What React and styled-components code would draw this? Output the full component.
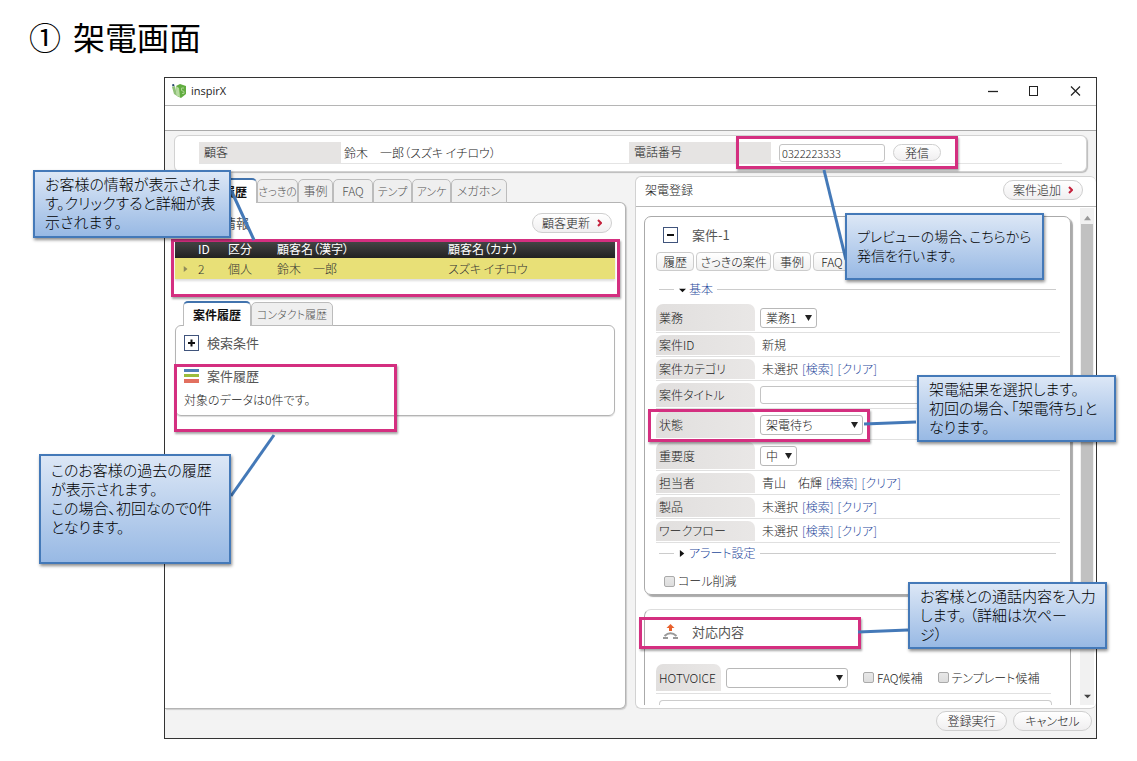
import React from "react";
import styled, { createGlobalStyle, css } from "styled-components";

const Global = createGlobalStyle`
  * { box-sizing: border-box; }
  body {
    margin: 0;
    background: #fff;
    color: #222;
    font-family: "Noto Sans CJK JP", "Noto Sans", sans-serif;
    font-feature-settings: "palt";
    font-size: 12px;
    line-height: 16px;
    font-weight: 300;
  }
  button, input, select {
    font: inherit;
    font-feature-settings: inherit;
    color: inherit;
    margin: 0;
  }
`;

const Page = styled.main`
  position: relative;
  min-width: 1000px;
  padding: 14px 40px 22px 164px;
`;

const Title = styled.h1`
  display: flex;
  gap: 12px;
  margin: 0 0 19px -135px;
  color: #000;
  font-size: 32px;
  line-height: 44px;
  font-weight: 400;
`;

/* ---------- application window ---------- */

const Window = styled.section`
  border: 1px solid #333;
  background: #f3f3f3;
`;

const TitleBar = styled.header`
  display: flex;
  align-items: center;
  gap: 4px;
  height: 28px;
  padding: 0 14px 2px 6px;
  background: #fff;
  border-bottom: 1px solid #b5b5b5;
  color: #222;
  font-family: "Open Sans", sans-serif;
  font-weight: 400;
  font-size: 11px;
`;

const AppName = styled.span`
  flex: 1;
`;

const WindowControls = styled.div`
  display: flex;
  gap: 28px;
`;

const WindowButton = styled.button`
  display: flex;
  padding: 0;
  border: 0;
  background: none;
`;

const MenuStrip = styled.div`
  height: 25px;
  background: #fff;
  border-bottom: 1px solid #aaa;
`;

const CustomerBar = styled.div`
  margin: 4px 9px 6px;
  padding: 6px 24px 7px;
  height: 37px;
  background: #fff;
  border: 1px solid #d2d2d2;
  border-radius: 6px;
  box-shadow: 1px 1px 1px #bbb;
`;

const CustomerFields = styled.div`
  display: grid;
  grid-template-columns: 142px 1fr 142px 291px;
  height: 22px;
  border-bottom: 1px solid #e4e4e4;
`;

const FieldName = styled.label`
  padding: 2px 5px;
  background: #e6e4e3;
`;

const FieldValue = styled.div`
  display: flex;
  align-items: center;
  gap: 8px;
  padding: 0 ${(p) => (p.$inset ? 8 : 3)}px;
`;

const TextInput = styled.input`
  width: ${(p) => p.$width};
  height: 18px;
  padding: 0 2px;
  border: 1px solid #c4c4c4;
  border-radius: 3px;
  background: #fff;
  font-size: 11px;
  line-height: 16px;
`;

const PillButton = styled.button`
  display: flex;
  align-items: center;
  justify-content: center;
  gap: 7px;
  min-width: ${(p) => p.$width}px;
  height: ${(p) => (p.$small ? 17 : 20)}px;
  padding: 0 9px;
  border: 1px solid #cfcfcf;
  border-radius: 10px;
  background: linear-gradient(#fff, #f0eff0);
  line-height: 16px;
`;

const Columns = styled.div`
  display: grid;
  grid-template-columns: 1fr 1fr;
  gap: 9px;
`;

/* ---------- left column ---------- */

const LeftColumn = styled.div`
  display: flex;
  flex-direction: column;
`;

const Tabs = styled.nav`
  display: flex;
  padding-left: ${(p) => p.$indent}px;
  position: relative;
  margin-bottom: -1px;
`;

const Tab = styled.button`
  width: ${(p) => p.$width}px;
  height: 24px;
  margin-top: 1px;
  padding: 0;
  overflow: hidden;
  white-space: nowrap;
  border: 1px solid #bcbcbc;
  border-radius: 5px 5px 0 0;
  background: #efefef;
  color: #555;
  font-size: ${(p) => (p.$small ? 11 : 12)}px;
  ${(p) =>
    p.$active &&
    css`
      height: 25px;
      margin-top: 0;
      border-top: 2px solid #4173ad;
      border-bottom: 0;
      background: #fff;
      color: #111;
      font-weight: 700;
    `}
`;

const LeftPanel = styled.section`
  flex: 1;
  padding: 10px 10px 11px;
  background: #fff;
  border: 1px solid #b4b4b4;
  border-left: 0;
  border-radius: 0 6px 6px 0;
  box-shadow: 1px 1px 1px #ccc;
`;

const PanelHead = styled.div`
  display: flex;
  align-items: center;
  justify-content: space-between;
  height: 20px;
  padding: 0 3px 0 22px;
`;

const Heading = styled.h2`
  margin: 0;
  font-size: 13px;
  line-height: 18px;
  font-weight: 400;
  color: #555;
`;

const CustomerTable = styled.table`
  width: 100%;
  margin: 7px 0 22px;
  border-collapse: collapse;
  table-layout: fixed;
  text-align: left;
  box-shadow: 0 2px 2px #ddd;

  col:nth-child(1) { width: 23px; }
  col:nth-child(2) { width: 30px; }
  col:nth-child(3) { width: 49px; }
  col:nth-child(4) { width: 171px; }
  th {
    height: 18px;
    padding: 0;
    background: linear-gradient(#484848, #222);
    color: #fff;
    font-weight: 400;
  }
  td {
    height: 21px;
    padding: 0;
    background: #e8e077;
    color: #333;
  }
  td svg { display: block; margin-left: 8px; }
`;

const HistoryPanel = styled.section`
  padding: 8px 8px 6px;
  height: 91px;
  border: 1px solid #b4b4b4;
  border-radius: 6px;
  box-shadow: 0 1px 1px #ddd;
`;

const IconHeading = styled.div`
  display: flex;
  align-items: center;
  gap: ${(p) => (p.$wide ? 14 : 8)}px;
  height: ${(p) => p.$height}px;
  margin-top: ${(p) => (p.$spaced ? 15 : 0)}px;
  padding-left: ${(p) => (p.$wide ? 7 : 0)}px;
`;

const ToggleButton = styled.button`
  display: flex;
  padding: 0;
  border: 0;
  background: none;
`;

const Message = styled.p`
  margin: 7px 0 0;
`;

/* ---------- right column ---------- */

const RightPanel = styled.section`
  display: flex;
  flex-direction: column;
  margin-top: -2px;
  background: #fff;
  border: 1px solid #d2d2d2;
  border-right: 0;
  border-radius: 6px;
`;

const RightHead = styled.div`
  display: flex;
  align-items: center;
  justify-content: space-between;
  height: 30px;
  padding: 0 13px 3px 9px;
  border-bottom: 1px solid #b8b8b8;
`;

const ScrollRow = styled.div`
  display: flex;
  align-items: stretch;
  margin-bottom: 3px;
`;

const ScrollContent = styled.div`
  flex: 1;
  padding: 9px 9px 0 8px;
`;

const ScrollTrack = styled.div`
  display: flex;
  flex-direction: column;
  align-items: center;
  justify-content: space-between;
  width: 14px;
  margin: 1px 2px 0 0;
  padding: 6px 0;
  background: #f1f1f1;
`;

const ScrollThumb = styled.div`
  flex: 1;
  width: 12px;
  margin: 3px 0 108px;
  background: #c1c1c1;
`;

const Card = styled.section`
  padding: 8px 10px 5px 11px;
  border: 1px solid #aaa;
  border-radius: 7px;
  box-shadow: 2px 2px 1px #aaa;
  ${(p) =>
    p.$open &&
    css`
      margin-top: 14px;
      padding-bottom: 0;
      border-bottom: 0;
      border-top-color: #ddd;
      border-radius: 7px 7px 0 0;
      box-shadow: none;
    `}
`;

const ButtonRow = styled.div`
  display: flex;
  gap: 2px;
  margin-top: 7px;
`;

const SmallButton = styled.button`
  width: ${(p) => p.$width}px;
  height: 19px;
  padding: 0;
  white-space: nowrap;
  border: 1px solid #ccc;
  border-radius: 4px;
  background: linear-gradient(#fff, #f0f0f0);
  line-height: 16px;
`;

const Legend = styled.div`
  display: flex;
  align-items: center;
  height: 16px;
  margin: ${(p) => p.$top}px 4px 0 3px;
  color: #1f4a9c;

  &::before {
    content: "";
    width: 15px;
    border-top: 1px solid #ccc;
  }
  &::after {
    content: "";
    flex: 1;
    margin-left: 4px;
    border-top: 1px solid #ccc;
  }
  button {
    display: flex;
    align-items: center;
    gap: 3px;
    margin-left: 5px;
    padding: 0;
    border: 0;
    background: none;
  }
`;

const FormRows = styled.div`
  margin-top: 5px;
`;

const Row = styled.div`
  display: flex;
  align-items: center;
  height: ${(p) => (p.$size === "l" ? 31 : p.$size === "m" ? 28 : 24)}px;
  padding: 2px 0 1px;
  border-bottom: 1px solid #e0e0e0;
`;

const RowLabel = styled.label`
  display: flex;
  align-items: center;
  align-self: stretch;
  width: ${(p) => (p.$narrow ? 65 : 99)}px;
  padding-left: 3px;
  border-radius: 7px 7px 0 0;
  background: linear-gradient(90deg, #e1dfde, #e9e7e6);
`;

const RowValue = styled.div`
  display: flex;
  flex: 1;
  align-items: center;
  gap: 4px;
  padding-left: ${(p) => (p.$text ? 7 : 5)}px;
`;

const Link = styled.a`
  color: #1f4a9c;
  text-decoration: none;
`;

const SelectBox = styled.div`
  display: grid;
  width: ${(p) => p.$width}px;
  height: 20px;

  > * { grid-area: 1 / 1; }
  svg {
    align-self: center;
    justify-self: end;
    margin-right: 5px;
    pointer-events: none;
  }
  select {
    appearance: none;
    width: 100%;
    height: 20px;
    padding: 0 5px;
    border: 1px solid #b8b8b8;
    border-radius: 3px;
    background: #fff;
    line-height: 16px;
  }
`;

const CheckLabel = styled.label`
  display: flex;
  align-items: center;
  gap: 3px;
`;

const CheckLine = styled.div`
  margin: 12px 0 0 8px;
`;

const Checkbox = styled.input`
  appearance: none;
  width: 11px;
  height: 11px;
  border: 1px solid #aaa;
  border-radius: 2px;
  background: linear-gradient(#e8e8e8, #ddd);
`;

const VoiceRow = styled.div`
  display: flex;
  align-items: center;
  height: 30px;
  margin: 18px 9px 0 0;
  padding-bottom: 2px;
  border-bottom: 1px solid #e0e0e0;
`;

const VoiceFields = styled.div`
  display: flex;
  align-items: center;
  gap: 15px;
  margin-left: 5px;
`;

const NoteBoxTop = styled.div`
  height: 5px;
  margin: 6px 8px 0 3px;
  border: 1px solid #ccc;
  border-bottom: 0;
  border-radius: 4px 4px 0 0;
`;

const Footer = styled.footer`
  display: flex;
  justify-content: flex-end;
  gap: 6px;
  padding: 2px 4px 7px;
`;

/* ---------- annotations over the window ---------- */

const placed = css`
  position: absolute;
  top: ${(p) => p.$top}px;
  ${(p) => (p.$right !== undefined ? `right: ${p.$right}px;` : `left: ${p.$left}px;`)}
  width: ${(p) => p.$width}px;
  height: ${(p) => p.$height}px;
`;

const Highlight = styled.div`
  ${placed}
  border: 3px solid #d42f80;
  box-shadow: 1px 2px 2px rgba(0, 0, 0, 0.35);
  pointer-events: none;
`;

const Callout = styled.aside`
  ${placed}
  padding: ${(p) => p.$pad}px 0 0 10px;
  border: 2px solid #4479b8;
  background: linear-gradient(#dce7f6, #98b9e4);
  box-shadow: 1px 2px 3px rgba(0, 0, 0, 0.45);
  color: #000;
  font-size: ${(p) => (p.$compact ? 14 : 15)}px;
  line-height: 19px;
  white-space: nowrap;
`;

const ConnectorSvg = styled.svg`
  ${placed}
  overflow: visible;
  pointer-events: none;
`;

function Connector({ top, left, right, width, height, rising }) {
  return (
    <ConnectorSvg $top={top} $left={left} $right={right} $width={width} $height={height} aria-hidden="true">
      <line
        x1="0"
        x2={width}
        y1={rising ? height : 0}
        y2={rising ? 0 : height}
        stroke="#4479b8"
        strokeWidth="3"
      />
    </ConnectorSvg>
  );
}

/* ---------- icons ---------- */

const Logo = () => (
  <svg width="16" height="16" viewBox="0 0 16 16" aria-hidden="true">
    <path d="M1 1.5 L3 1 L3.5 3 L1.5 3.5 Z" fill="#26466b" />
    <path d="M1 4 L4 3 L6 13 L3 11 Z" fill="#8fc077" />
    <path d="M5 3 L9 1 L15 3 L15 11 L10 15 L6 13 Z" fill="#62ad40" />
    <path d="M5 3 L8 5 L9 14 L6 13 Z" fill="#b7dba0" />
    <path d="M13 5 H10.5 V7.5 L13 8.5 V10.5 H11" stroke="#a9d391" strokeWidth="1" fill="none" />
  </svg>
);

const Chevron = () => (
  <svg width="5" height="8" viewBox="0 0 5 8" aria-hidden="true">
    <path d="M1 1 L4 4 L1 7" fill="none" stroke="#c4213c" strokeWidth="2" />
  </svg>
);

const Toggle = ({ plus }) => (
  <svg width="15" height="16" viewBox="0 0 15 16" aria-hidden="true">
    <rect x="0.5" y="0.5" width="14" height="15" fill="#fff" stroke="#40547c" />
    <path d={plus ? "M4 8 H11 M7.5 4.5 V11.5" : "M4 8 H11"} stroke="#111" strokeWidth="2" />
  </svg>
);

const Bars = () => (
  <svg width="15" height="14" viewBox="0 0 15 14" aria-hidden="true">
    <rect width="15" height="3" fill="#4f7fb8" />
    <rect y="5" width="15" height="3" fill="#9bbd3c" />
    <rect y="10" width="15" height="4" fill="#e2705f" />
  </svg>
);

const CallIcon = () => (
  <svg width="15" height="16" viewBox="0 0 15 16" aria-hidden="true">
    <path d="M7.5 0 L11.5 4 H9 V7 H6 V4 H3.5 Z" fill="#e8602c" />
    <path d="M1.5 12 Q7.5 6.5 13.5 12" fill="none" stroke="#999" strokeWidth="2" />
    <path d="M0 14 H5 M10 14 H15" stroke="#999" strokeWidth="2" />
  </svg>
);

const Triangle = ({ dir = "down", color = "#222", size = 7 }) => {
  const shape = {
    down: "M0 1 H8 L4 8 Z",
    up: "M0 7 H8 L4 2 Z",
    right: "M1 0 V8 L6 4 Z",
    flat: "M0 3 H8 L4 7 Z",
  }[dir];
  return (
    <svg width={size} height={size} viewBox="0 0 8 8" aria-hidden="true">
      <path d={shape} fill={color} />
    </svg>
  );
};

/* ---------- composed parts ---------- */

function Select({ id, width, value }) {
  return (
    <SelectBox $width={width}>
      <select id={id} defaultValue={value}>
        <option>{value}</option>
      </select>
      <Triangle />
    </SelectBox>
  );
}

function FormRow({ label, size, htmlFor, text, children }) {
  return (
    <Row $size={size}>
      <RowLabel as={htmlFor ? "label" : "div"} htmlFor={htmlFor}>
        {label}
      </RowLabel>
      <RowValue $text={text}>{children}</RowValue>
    </Row>
  );
}

function Picker({ value }) {
  return (
    <>
      <span>{value}</span>
      <Link href="#search">[検索]</Link>
      <Link href="#clear">[クリア]</Link>
    </>
  );
}

export default function App() {
  return (
    <Page>
      <Global />
      <Title>
        <span>①</span>
        <span>架電画面</span>
      </Title>

      <Window>
        <TitleBar>
          <Logo />
          <AppName>inspirX</AppName>
          <WindowControls>
            <WindowButton aria-label="最小化">
              <svg width="12" height="12">
                <path d="M1 6.5 H11" stroke="#222" strokeWidth="1.3" />
              </svg>
            </WindowButton>
            <WindowButton aria-label="最大化">
              <svg width="13" height="12">
                <rect x="2.5" y="1.5" width="8" height="9" fill="none" stroke="#222" />
              </svg>
            </WindowButton>
            <WindowButton aria-label="閉じる">
              <svg width="14" height="12">
                <path d="M3 1.5 L12 10.5 M12 1.5 L3 10.5" stroke="#222" strokeWidth="1.2" />
              </svg>
            </WindowButton>
          </WindowControls>
        </TitleBar>
        <MenuStrip />

        <CustomerBar>
          <CustomerFields>
            <FieldName as="div">顧客</FieldName>
            <FieldValue>鈴木　一郎（スズキ イチロウ）</FieldValue>
            <FieldName htmlFor="phone">電話番号</FieldName>
            <FieldValue $inset>
              <TextInput id="phone" type="tel" $width="106px" defaultValue="0322223333" />
              <PillButton $small $width={48}>発信</PillButton>
            </FieldValue>
          </CustomerFields>
        </CustomerBar>

        <Columns>
          <LeftColumn>
            <Tabs $indent={24}>
              <Tab $active $width={68}>顧客履歴</Tab>
              <Tab $small $width={41}>さっきの</Tab>
              <Tab $width={35}>事例</Tab>
              <Tab $width={40}>FAQ</Tab>
              <Tab $small $width={39}>テンプ</Tab>
              <Tab $small $width={39}>アンケ</Tab>
              <Tab $width={56}>メガホン</Tab>
            </Tabs>
            <LeftPanel>
              <PanelHead>
                <Heading>顧客情報</Heading>
                <PillButton $width={79}>
                  顧客更新 <Chevron />
                </PillButton>
              </PanelHead>
              <CustomerTable>
                <colgroup>
                  <col />
                  <col />
                  <col />
                  <col />
                  <col />
                </colgroup>
                <thead>
                  <tr>
                    <th aria-label="選択" />
                    <th>ID</th>
                    <th>区分</th>
                    <th>顧客名（漢字）</th>
                    <th>顧客名（カナ）</th>
                  </tr>
                </thead>
                <tbody>
                  <tr>
                    <td>
                      <Triangle dir="right" color="#8f8b5a" size={6} />
                    </td>
                    <td>2</td>
                    <td>個人</td>
                    <td>鈴木　一郎</td>
                    <td>スズキ イチロウ</td>
                  </tr>
                </tbody>
              </CustomerTable>

              <Tabs $indent={8}>
                <Tab $active $width={68}>案件履歴</Tab>
                <Tab $small $width={82}>コンタクト履歴</Tab>
              </Tabs>
              <HistoryPanel>
                <IconHeading $height={18}>
                  <ToggleButton aria-label="検索条件を開く">
                    <Toggle plus />
                  </ToggleButton>
                  <Heading>検索条件</Heading>
                </IconHeading>
                <IconHeading $spaced $height={18}>
                  <Bars />
                  <Heading>案件履歴</Heading>
                </IconHeading>
                <Message>対象のデータは0件です。</Message>
              </HistoryPanel>
            </LeftPanel>
          </LeftColumn>

          <RightPanel>
            <RightHead>
              <span>架電登録</span>
              <PillButton $width={79}>
                案件追加 <Chevron />
              </PillButton>
            </RightHead>
            <ScrollRow>
              <ScrollContent>
                <Card>
                  <IconHeading $wide $height={20}>
                    <ToggleButton aria-label="案件を閉じる">
                      <Toggle />
                    </ToggleButton>
                    <Heading>案件-1</Heading>
                  </IconHeading>
                  <ButtonRow>
                    <SmallButton $width={38}>履歴</SmallButton>
                    <SmallButton $width={75}>さっきの案件</SmallButton>
                    <SmallButton $width={38}>事例</SmallButton>
                    <SmallButton $width={38}>FAQ</SmallButton>
                  </ButtonRow>
                  <Legend $top={10}>
                    <button>
                      <Triangle dir="flat" color="#111" /> 基本
                    </button>
                  </Legend>
                  <FormRows>
                    <FormRow label="業務" size="l" htmlFor="task">
                      <Select id="task" width={57} value="業務1" />
                    </FormRow>
                    <FormRow label="案件ID" text>
                      新規
                    </FormRow>
                    <FormRow label="案件カテゴリ" text>
                      <Picker value="未選択" />
                    </FormRow>
                    <FormRow label="案件タイトル" size="m" htmlFor="subject">
                      <TextInput id="subject" type="text" $width="90%" />
                    </FormRow>
                    <FormRow label="状態" size="l" htmlFor="state">
                      <Select id="state" width={103} value="架電待ち" />
                    </FormRow>
                    <FormRow label="重要度" size="l" htmlFor="priority">
                      <Select id="priority" width={37} value="中" />
                    </FormRow>
                    <FormRow label="担当者" text>
                      <Picker value="青山　佑輝" />
                    </FormRow>
                    <FormRow label="製品" text>
                      <Picker value="未選択" />
                    </FormRow>
                    <FormRow label="ワークフロー" text>
                      <Picker value="未選択" />
                    </FormRow>
                  </FormRows>
                  <Legend $top={2}>
                    <button>
                      <Triangle dir="right" color="#111" /> アラート設定
                    </button>
                  </Legend>
                  <CheckLine>
                    <CheckLabel>
                      <Checkbox type="checkbox" />
                      コール削減
                    </CheckLabel>
                  </CheckLine>
                </Card>

                <Card $open>
                  <IconHeading $wide $height={28}>
                    <CallIcon />
                    <Heading>対応内容</Heading>
                  </IconHeading>
                  <VoiceRow>
                    <RowLabel $narrow htmlFor="voice">
                      HOTVOICE
                    </RowLabel>
                    <VoiceFields>
                      <Select id="voice" width={122} value="" />
                      <CheckLabel>
                        <Checkbox type="checkbox" />
                        FAQ候補
                      </CheckLabel>
                      <CheckLabel>
                        <Checkbox type="checkbox" />
                        テンプレート候補
                      </CheckLabel>
                    </VoiceFields>
                  </VoiceRow>
                  <NoteBoxTop />
                </Card>
              </ScrollContent>
              <ScrollTrack>
                <Triangle dir="up" color="#999" />
                <ScrollThumb />
                <Triangle dir="flat" color="#444" />
              </ScrollTrack>
            </ScrollRow>
          </RightPanel>
        </Columns>

        <Footer>
          <PillButton $width={71}>登録実行</PillButton>
          <PillButton $width={79}>キャンセル</PillButton>
        </Footer>
      </Window>

      <Highlight $top={136} $right={179} $width={222} $height={33} />
      <Highlight $top={239} $left={171} $width={449} $height={58} />
      <Highlight $top={364} $left={174} $width={223} $height={68} />
      <Highlight $top={409} $right={267} $width={222} $height={33} />
      <Highlight $top={617} $right={276} $width={222} $height={32} />

      <Connector top={190} left={231} width={23} height={50} />
      <Connector top={170} right={291} width={22} height={90} />
      <Connector top={422} right={221} width={52} height={2} rising />
      <Connector top={630} right={229} width={50} height={2} rising />
      <Connector top={435} left={231} width={43} height={61} rising />

      <Callout $top={170} $left={33} $width={198} $height={68} $pad={2}>
        お客様の情報が表示されま
        <br />
        す。クリックすると詳細が表
        <br />
        示されます。
      </Callout>
      <Callout $compact $top={213} $right={93} $width={199} $height={67} $pad={12}>
        プレビューの場合、こちらから
        <br />
        発信を行います。
      </Callout>
      <Callout $top={375} $right={21} $width={199} $height={67} $pad={2}>
        架電結果を選択します。
        <br />
        初回の場合、「架電待ち」と
        <br />
        なります。
      </Callout>
      <Callout $top={582} $right={30} $width={199} $height={67} $pad={2}>
        お客様との通話内容を入力
        <br />
        します。 （詳細は次ペー
        <br />
        ジ）
      </Callout>
      <Callout $top={454} $left={39} $width={192} $height={110} $pad={4}>
        このお客様の過去の履歴
        <br />
        が表示されます。
        <br />
        この場合、初回なので0件
        <br />
        となります。
      </Callout>
    </Page>
  );
}
